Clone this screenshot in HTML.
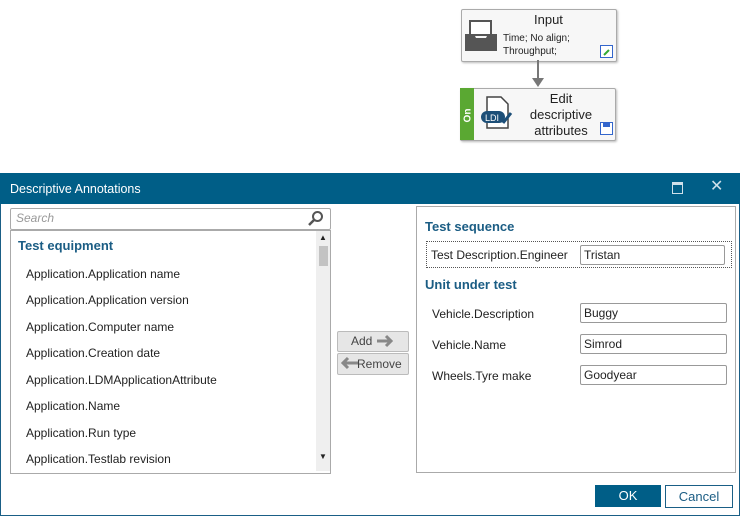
<!DOCTYPE html><html><head><style>
body{margin:0;width:746px;height:531px;background:#fff;font-family:"Liberation Sans",sans-serif;position:relative;overflow:hidden;font-size:12px;color:#222}
.a{position:absolute}
.node{position:absolute;border:1px solid #aaa;border-radius:2px;background:#f7f7f7;box-shadow:1px 1px 2px #bbb}
.it{position:absolute;left:26px;font-size:12px}
.lbl{position:absolute;left:432px;font-size:12px}
.in{position:absolute;left:580px;width:142px;height:18px;border:1px solid #999;border-radius:2px;font-size:12px;line-height:18px;padding-left:3px;box-sizing:content-box}
.btn{position:absolute;border:1px solid #bbb;background:#e6e6e6;border-radius:2px;font-size:12px;color:#444}
</style></head><body>
<div class="node" style="left:461px;top:9px;width:154px;height:51px"></div>
<svg class="a" style="left:464px;top:19px" width="34" height="34"><path d="M6 2h21v14H6z" fill="#fff" stroke="#555" stroke-width="2"/><path d="M1 15h9l2 4h10l2-4h9v17H1z" fill="#555"/></svg>
<div class="a" style="left:534px;top:12px;font-size:13px">Input</div>
<div class="a" style="left:503px;top:32px;font-size:10px;line-height:13px">Time; No align;<br>Throughput;</div>
<svg class="a" style="left:600px;top:45px" width="13" height="13"><rect x=".5" y=".5" width="12" height="12" fill="#fff" stroke="#36c"/><path d="M4 10l5-5" stroke="#3a3" stroke-width="2"/></svg>
<div class="a" style="left:537px;top:60px;width:2px;height:20px;background:#777"></div>
<svg class="a" style="left:532px;top:78px" width="12" height="10"><path d="M0 0h12L6 9z" fill="#777"/></svg>
<div class="node" style="left:460px;top:88px;width:155px;height:51px;border-left:none"></div>
<div class="a" style="left:460px;top:88px;width:14px;height:52px;background:#5aa832"></div>
<div class="a" style="left:461px;top:110px;color:#fff;font-size:10px;font-weight:bold;transform:rotate(-90deg)">On</div>
<svg class="a" style="left:479px;top:95px" width="34" height="36"><path d="M8 2h14l7 7v24H8z" fill="#fff" stroke="#444" stroke-width="1.5"/><rect x="2" y="16" width="24" height="12" rx="6" fill="#1d4f78"/><text x="6" y="26" fill="#fff" font-size="9" font-family="Liberation Sans">LDI</text><path d="M24 28l8-10" stroke="#1d4f78" stroke-width="3"/></svg>
<div class="a" style="left:518px;top:91px;width:86px;text-align:center;font-size:13px;line-height:16px">Edit<br>descriptive<br>attributes</div>
<svg class="a" style="left:600px;top:122px" width="13" height="13"><rect x=".5" y=".5" width="12" height="12" fill="#fff" stroke="#36c"/><rect x="3" y="1" width="7" height="4" fill="#36c"/></svg>

<div class="a" style="left:0;top:173px;width:740px;height:343px;border:1px solid #1a5f86;box-sizing:border-box"></div>
<div class="a" style="left:0;top:173px;width:740px;height:31px;background:#005e87"></div>
<div class="a" style="left:10px;top:182px;color:#fff;font-size:12.5px">Descriptive Annotations</div>
<div class="a" style="left:672px;top:182px;width:9px;height:8px;border:1.5px solid #cfe0ea;border-top-width:3px"></div>
<div class="a" style="left:710px;top:176px;color:#cfe0ea;font-size:16px">✕</div>

<div class="a" style="left:10px;top:208px;width:319px;height:20px;border:1px solid #aaa;border-radius:2px"></div>
<div class="a" style="left:16px;top:211px;color:#999;font-style:italic;font-size:12px">Search</div>
<svg class="a" style="left:308px;top:210px" width="16" height="16"><circle cx="9.5" cy="6.5" r="4.5" fill="none" stroke="#555" stroke-width="2"/><path d="M6 10l-5 5" stroke="#555" stroke-width="2.5"/></svg>
<div class="a" style="left:10px;top:230px;width:319px;height:242px;border:1px solid #aaa"></div>
<div class="a" style="left:316px;top:231px;width:14px;height:240px;background:#efefef"></div>
<div class="a" style="left:319px;top:246px;width:9px;height:20px;background:#c3c3c3"></div>
<div class="a" style="left:319px;top:233px;font-size:8px">▲</div>
<div class="a" style="left:319px;top:452px;font-size:8px">▼</div>
<div class="a" style="left:18px;top:238px;color:#1b5d84;font-weight:bold;font-size:13px">Test equipment</div>
<div class="it" style="top:267px">Application.Application name</div>
<div class="it" style="top:293px">Application.Application version</div>
<div class="it" style="top:320px">Application.Computer name</div>
<div class="it" style="top:346px">Application.Creation date</div>
<div class="it" style="top:373px">Application.LDMApplicationAttribute</div>
<div class="it" style="top:399px">Application.Name</div>
<div class="it" style="top:426px">Application.Run type</div>
<div class="it" style="top:452px">Application.Testlab revision</div>

<div class="btn" style="left:337px;top:331px;width:70px;height:19px"></div>
<div class="a" style="left:351px;top:334px;font-size:12px;color:#444">Add</div>
<svg class="a" style="left:376px;top:334px" width="20" height="14"><path d="M1 7h14M10 2l5 5-5 5" fill="none" stroke="#888" stroke-width="3"/></svg>
<div class="btn" style="left:337px;top:353px;width:70px;height:20px"></div>
<svg class="a" style="left:339px;top:356px" width="20" height="14"><path d="M19 7H4M9 2L4 7l5 5" fill="none" stroke="#888" stroke-width="3"/></svg>
<div class="a" style="left:357px;top:357px;font-size:12px;color:#444">Remove</div>

<div class="a" style="left:416px;top:206px;width:320px;height:267px;border:1px solid #aaa;box-sizing:border-box"></div>
<div class="a" style="left:425px;top:219px;color:#1b5d84;font-weight:bold;font-size:13px">Test sequence</div>
<div class="a" style="left:426px;top:241px;width:304px;height:25px;border:1px dotted #555"></div>
<div class="lbl" style="top:248px;left:431px">Test Description.Engineer</div>
<div class="in" style="top:245px;left:580px;width:140px">Tristan</div>
<div class="a" style="left:425px;top:277px;color:#1b5d84;font-weight:bold;font-size:13px">Unit under test</div>
<div class="lbl" style="top:307px">Vehicle.Description</div>
<div class="in" style="top:303px">Buggy</div>
<div class="lbl" style="top:338px">Vehicle.Name</div>
<div class="in" style="top:334px">Simrod</div>
<div class="lbl" style="top:369px">Wheels.Tyre make</div>
<div class="in" style="top:365px">Goodyear</div>

<div class="a" style="left:595px;top:485px;width:66px;height:22px;background:#005e87;color:#fff;text-align:center;line-height:22px;font-size:13px">OK</div>
<div class="a" style="left:665px;top:485px;width:66px;height:21px;border:1px solid #1a5f86;color:#1b5d84;text-align:center;line-height:21px;font-size:13px">Cancel</div>
</body></html>
